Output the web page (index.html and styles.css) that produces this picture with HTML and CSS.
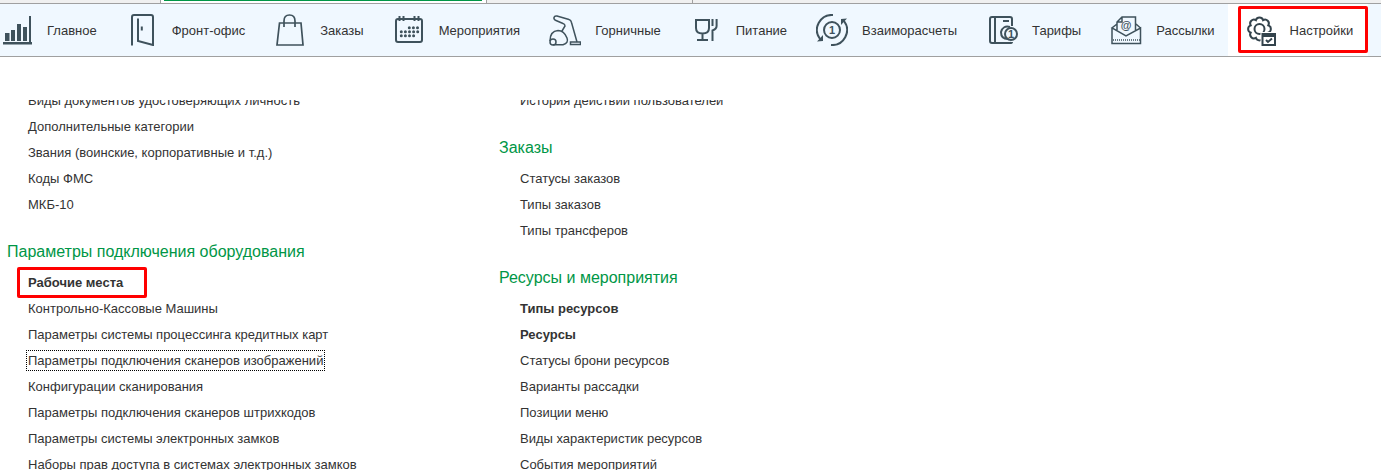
FILE: index.html
```html
<!DOCTYPE html>
<html lang="ru">
<head>
  <meta charset="UTF-8">
  <meta name="viewport" content="width=device-width, initial-scale=1.0">
  <title>Настройки</title>
  <link rel="stylesheet" href="styles.css">
</head>
<body>
  <div class="tabs">
    <div class="tab tab-home"></div>
    <div class="tab tab-active"></div>
    <div class="tab"></div>
  </div>

  <nav class="sections">
    <a href="#main">
      <svg viewBox="0 0 32 32"><path class="fill" d="M4 19h4.500v8H4zM10 16h4v11h-4zM16 10h4v17h-4zM22 13h4v14h-4zM28 2h2v26h1v2.500H2V28h26z"/></svg>
      <span>Главное</span>
    </a>
    <a href="#front">
      <svg viewBox="0 0 32 32"><path d="M6 31.500V3q0-2 2-2h17q2 0 2 2v28l-15-4V4.500M15.800 12.500v4"/></svg>
      <span>Фронт-офис</span>
    </a>
    <a href="#orders">
      <svg viewBox="0 0 32 32"><path class="mid" d="M5.500 9h21.500l2 22h-26zM10 13V7q0-6 5.500-6T21 7v6"/></svg>
      <span>Заказы</span>
    </a>
    <a href="#events">
      <svg viewBox="0 0 32 32"><rect x="3" y="5" width="26" height="23" rx="2"/><path d="M6.500 2v5M10.500 2v5M21.500 2v5M25.500 2v5"/><path class="dots" d="M16.300 13.700h8.500M8.300 17.700h16.500M8.300 21.700h13"/></svg>
      <span>Мероприятия</span>
    </a>
    <a href="#maids">
      <svg viewBox="0 0 32 32"><path class="thin" d="M13 17l3-5q0-2-2-2.500L7 6.500Q4.500 5.500 5 3.500T8 2l12 3.500q2 .5 2.500 3L28 28M1 27q0-10 8-10.500 6 0 9 7.500 2 5-4 6.800H4"/><circle class="thin" cx="4" cy="28" r="3"/><rect class="thin" x="21.500" y="28" width="10" height="2.500"/></svg>
      <span>Горничные</span>
    </a>
    <a href="#food">
      <svg viewBox="0 0 32 32"><path d="M6 6h13v8q0 5.500-6.500 5.500T6 14zM12.500 19.500V26M7 26h11M22.500 5v7M26.600 5v7q0 3-4.100 4.500v10.500"/></svg>
      <span>Питание</span>
    </a>
    <a href="#payments">
      <svg viewBox="0 0 32 32"><circle cx="16" cy="16" r="8"/><path d="M17 1A15 15 0 0 0 4 25M15 31A15 15 0 0 0 28 7"/><path class="fill" d="M1 27.500l6-.5v-6zM31 4.500l-6 .5v6z"/><text x="16" y="20">1</text></svg>
      <span>Взаиморасчеты</span>
    </a>
    <a href="#rates">
      <svg viewBox="0 0 32 32"><path d="M26 28q0 1-2 1H6q-2 0-2-2V5q0-2 2-2h18q2 0 2 2v7M9 3v26M17 7h6M24 13q-7-2-9 5 0 7 7 7"/><circle cx="25" cy="20" r="6"/><text x="25" y="24">1</text></svg>
      <span>Тарифы</span>
    </a>
    <a href="#mail">
      <svg viewBox="0 0 32 32"><path class="thin" d="M2 14v15.500h28.500V14L16 22 2 14l5-4M30.500 14L26 10M7 16V8l5-5h13.500v13M7 8h5V3"/><path class="thin dashed" d="M3 26h27"/><text class="at" x="16" y="15">@</text></svg>
      <span>Рассылки</span>
    </a>
    <a href="#settings" class="active">
      <svg viewBox="0 0 32 32"><path class="dark" d="M24.300 18.600A3.800 3.800 0 0 1 19.100 23.800A3.800 3.800 0 0 1 11.900 23.800A3.800 3.800 0 0 1 6.700 18.600A3.800 3.800 0 0 1 6.700 11.400A3.800 3.800 0 0 1 11.900 6.200A3.800 3.800 0 0 1 19.100 6.200A3.800 3.800 0 0 1 24.300 11.400A3.800 3.800 0 0 1 24.300 18.600z"/><circle class="dark" cx="15.500" cy="15" r="5"/><path class="gap" d="M16.500 18H32v14H16.500z"/><rect class="dark" x="18.500" y="20" width="12.500" height="11"/><path class="dark" d="M18.500 22h12.500M22 26l2 2 4-3.500"/></svg>
      <span>Настройки</span>
    </a>
  </nav>

  <main class="content">
    <div class="columns">
      <div class="column">
        <ul>
          <li><a href="#">Виды документов удостоверяющих личность</a></li>
          <li><a href="#">Дополнительные категории</a></li>
          <li><a href="#">Звания (воинские, корпоративные и т.д.)</a></li>
          <li><a href="#">Коды ФМС</a></li>
          <li><a href="#">МКБ-10</a></li>
        </ul>
        <h2>Параметры подключения оборудования</h2>
        <ul>
          <li><a href="#" class="main marked">Рабочие места</a></li>
          <li><a href="#">Контрольно-Кассовые Машины</a></li>
          <li><a href="#">Параметры системы процессинга кредитных карт</a></li>
          <li><a href="#" class="focused">Параметры подключения сканеров изображений</a></li>
          <li><a href="#">Конфигурации сканирования</a></li>
          <li><a href="#">Параметры подключения сканеров штрихкодов</a></li>
          <li><a href="#">Параметры системы электронных замков</a></li>
          <li><a href="#">Наборы прав доступа в системах электронных замков</a></li>
        </ul>
      </div>
      <div class="column">
        <ul>
          <li><a href="#">История действий пользователей</a></li>
        </ul>
        <h2>Заказы</h2>
        <ul>
          <li><a href="#">Статусы заказов</a></li>
          <li><a href="#">Типы заказов</a></li>
          <li><a href="#">Типы трансферов</a></li>
        </ul>
        <h2>Ресурсы и мероприятия</h2>
        <ul>
          <li><a href="#" class="main">Типы ресурсов</a></li>
          <li><a href="#" class="main">Ресурсы</a></li>
          <li><a href="#">Статусы брони ресурсов</a></li>
          <li><a href="#">Варианты рассадки</a></li>
          <li><a href="#">Позиции меню</a></li>
          <li><a href="#">Виды характеристик ресурсов</a></li>
          <li><a href="#">События мероприятий</a></li>
        </ul>
      </div>
    </div>
  </main>
</body>
</html>
```
FILE: styles.css
```css
* { box-sizing: border-box; }
body {
  margin: 0;
  height: 100vh;
  display: flex;
  flex-direction: column;
  overflow: hidden;
  background: #fff;
  color: #333;
  font-family: "Liberation Sans", Arial, sans-serif;
  font-size: 13px;
}
a { color: inherit; text-decoration: none; }

/* нижний край панели вкладок */
.tabs { display: flex; flex: none; height: 4px; background: #f0f0f0; border-bottom: 1px solid #a0a0a0; }
.tab { width: 206px; border-right: 1px solid #a0a0a0; }
.tab-home { width: 161px; }
.tab-active { width: 326px; padding: 0 4px 0 3px; background: #fff; }
.tab-active::before { content: ""; display: block; height: 1px; background: #009646; }

.sections { display: flex; flex: none; height: 53px; background: #f0f8ff; border-bottom: 1px solid #a0a0a0; }
.sections a { display: flex; align-items: center; gap: 14px; padding: 0 13px 0 16px; white-space: nowrap; }
.sections a:first-child { padding-left: 1px; }
.sections .active { background: #fff; position: relative; padding-right: 15px; }
.sections .active::after { content: ""; position: absolute; inset: 2px 0 3px 10px; border: 3px solid #f00; border-radius: 2px; }
.sections svg { flex: none; width: 32px; height: 32px; fill: none; stroke: #3f525c; stroke-width: 2; }
.sections .fill { fill: #3f525c; stroke: none; }
.sections .mid { stroke-width: 1.7; }
.sections .thin { stroke-width: 1.5; }
.sections .dark { stroke: #33434c; }
.sections .gap { fill: #fff; stroke: none; }
.sections .dots { stroke-width: 3; stroke-linecap: round; stroke-dasharray: 0 4.1; }
.sections .dashed { stroke-dasharray: 1 1; }
.sections text { fill: #3f525c; stroke: none; font-size: 11px; font-weight: bold; text-anchor: middle; }

.content { flex: 1; min-height: 0; margin-top: 43px; overflow: hidden; }
.columns { display: grid; grid-template-columns: 492px 1fr; margin-top: -13px; padding-left: 7px; }
.column ul { list-style: none; margin: 0; padding: 0 0 0 21px; }
.column li { display: flex; align-items: center; height: 26px; white-space: nowrap; }
.column h2 { margin: 18px 0 0; color: #009646; font-size: 16px; font-weight: normal; line-height: 34px; }
.main { font-weight: bold; }
.marked { margin-left: -11px; padding: 5px 21px 5px 8px; border: 3px solid #f00; border-radius: 2px; }
.focused { margin-left: -2px; padding: 2px 1px; border: 1px dotted #000; }
```
